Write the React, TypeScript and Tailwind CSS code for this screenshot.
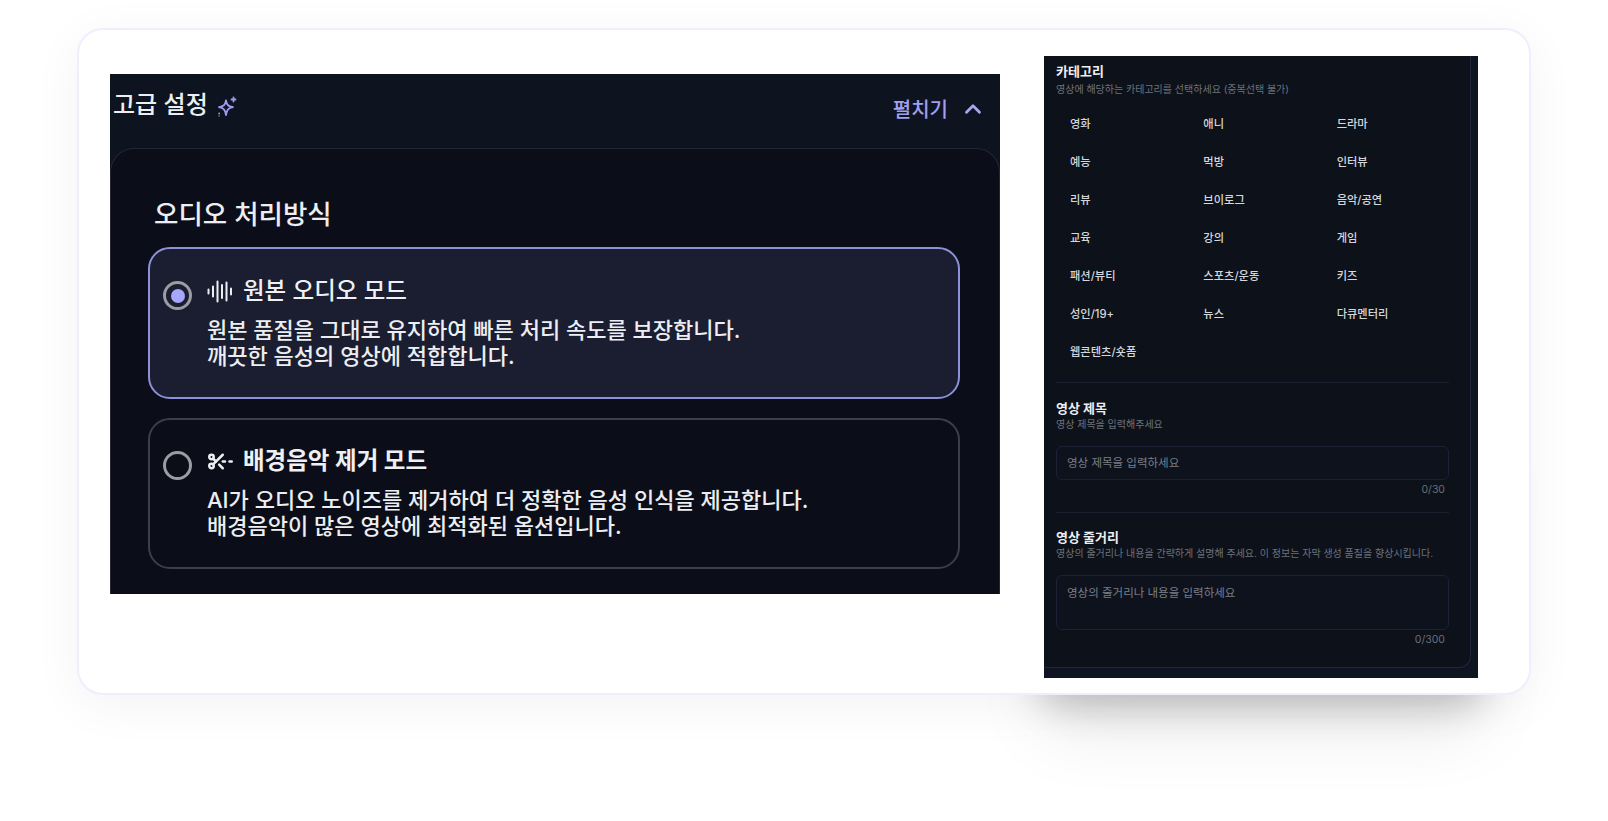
import { ChevronUp, ScissorsLineDashed } from "lucide-react";

const categories = [
  "영화", "애니", "드라마",
  "예능", "먹방", "인터뷰",
  "리뷰", "브이로그", "음악/공연",
  "교육", "강의", "게임",
  "패션/뷰티", "스포츠/운동", "키즈",
  "성인/19+", "뉴스", "다큐멘터리",
  "웹콘텐츠/숏폼",
];

function Sparkle() {
  return (
    <svg width="22" height="22" viewBox="0 0 22 22" fill="none" stroke="#9b9cf0" strokeWidth="1.8" strokeLinejoin="round" strokeLinecap="round">
      <path d="M10 4.5 C10.8 9 12.2 10.4 17 11.2 C12.2 12 10.8 13.6 10 19 C9.2 13.6 7.6 12 3 11.2 C7.6 10.4 9.2 9 10 4.5 Z" />
      <path d="M17.5 1.5v4M15.5 3.5h4" />
      <circle cx="3.2" cy="17.5" r="0.9" fill="#9b9cf0" stroke="none" />
      <circle cx="3" cy="20" r="0.7" fill="#9b9cf0" stroke="none" />
    </svg>
  );
}

function Wave() {
  return (
    <svg width="27" height="27" viewBox="0 0 27 27" fill="none" stroke="#eceef2" strokeWidth="2" strokeLinecap="round">
      <path d="M1.5 11.5v4M6 8.5v10M10.5 3.5v20M15 7v13M19.5 4.5v18M24 10.5v6" />
    </svg>
  );
}

function Option({ active, icon, title, lines, bold }: { active?: boolean; icon: React.ReactNode; title: string; lines: string[]; bold?: boolean }) {
  return (
    <div
      className={
        active
          ? "ml-[37px] w-[812px] h-[152px] rounded-[22px] border-2 border-[#8e90d8] bg-[#1a1e30] flex gap-[15px] pl-[13px] pt-[27px]"
          : "ml-[37px] w-[812px] h-[151px] rounded-[22px] border-2 border-[#3c3e4d] bg-[#0b0e18] flex gap-[15px] pl-[13px] pt-[26px]"
      }
    >
      <div className="mt-[5px] w-[29px] h-[29px] shrink-0 rounded-full border-[3px] border-[#9c9ca2] flex items-center justify-center">
        {active && <div className="w-[14px] h-[14px] rounded-full bg-[#a6a7fb]" />}
      </div>
      <div className="flex flex-col">
        <div className="flex items-center gap-[9px] h-[30px]">
          {icon}
          <span className={bold ? "text-[23.5px] font-bold leading-[30px] text-[#eef0f4]" : "text-[23.5px] font-medium leading-[30px] text-[#eef0f4]"}>{title}</span>
        </div>
        <div className="mt-[12px] text-[22px] font-medium leading-[25.6px] text-[#eceef2]">
          {lines.map((l) => (
            <div key={l}>{l}</div>
          ))}
        </div>
      </div>
    </div>
  );
}

export default function App() {
  return (
    <div className="relative w-[1608px] h-[821px] overflow-hidden bg-white font-['Inter','Noto_Sans_CJK_KR',sans-serif]">
      <div className="absolute left-[1044px] top-[400px] w-[434px] h-[278px] shadow-[0_26px_36px_rgba(0,0,0,0.2),0_50px_70px_rgba(0,0,0,0.09)]" />
      <div className="relative mt-[28px] ml-[77px] w-[1454px] h-[667px] rounded-[26px] border-2 border-[#f0eefe] bg-white shadow-[0_10px_50px_rgba(0,0,0,0.05)] flex items-start pl-[31px]">
        {/* left panel */}
        <div className="mt-[44px] w-[890px] h-[520px] shrink-0 overflow-hidden bg-[#0e1320] flex flex-col">
          <div className="h-[74px] shrink-0 flex justify-between pl-[3px] pr-[18px]">
            <div className="flex items-start gap-[8px] pt-[16px]">
              <span className="text-[24px] font-medium leading-[30px] text-[#eceef2]">고급 설정</span>
              <span className="mt-[6px]"><Sparkle /></span>
            </div>
            <div className="flex items-start gap-[12px] pt-[22px]">
              <span className="text-[20px] font-medium leading-[28px] text-[#9fa0ee]">펼치기</span>
              <ChevronUp size={26} strokeWidth={2.6} className="mt-[0px] -mr-[4px] text-[#a6a7ef]" />
            </div>
          </div>
          <div className="flex-1 rounded-t-[24px] border border-[#242636] border-b-0 bg-[#0b0e18]">
            <h2 className="pt-[49px] pl-[43px] text-[26.5px] font-medium leading-[32px] text-[#eceef2]">오디오 처리방식</h2>
            <div className="mt-[17px] flex flex-col gap-[19px]">
              <Option
                active
                icon={<Wave />}
                title="원본 오디오 모드"
                lines={["원본 품질을 그대로 유지하여 빠른 처리 속도를 보장합니다.", "깨끗한 음성의 영상에 적합합니다."]}
              />
              <Option
                bold
                icon={<ScissorsLineDashed size={27} strokeWidth={2.2} className="text-[#eceef2]" />}
                title="배경음악 제거 모드"
                lines={["AI가 오디오 노이즈를 제거하여 더 정확한 음성 인식을 제공합니다.", "배경음악이 많은 영상에 최적화된 옵션입니다."]}
              />
            </div>
          </div>
        </div>

        {/* right panel */}
        <div className="mt-[26px] ml-[44px] w-[434px] h-[622px] shrink-0 overflow-hidden bg-[#0f1422]">
          <div className="w-[427px] h-[612px] rounded-br-[12px] border-r border-b border-[#23263a] bg-[#0c111a] pl-[12px] pt-[6px] pr-[21px]">
            <h3 className="text-[13px] font-bold leading-[18px] text-[#eceef2]">카테고리</h3>
            <p className="mt-[2px] text-[10px] leading-[14px] text-[#6f727c]">영상에 해당하는 카테고리를 선택하세요 (중복선택 불가)</p>
            <div className="mt-[9px] grid grid-cols-3 w-[400px] auto-rows-[38px]">
              {categories.map((c) => (
                <div key={c} className="pl-[14px] flex items-center text-[11.25px] font-medium text-[#d5d7dd]">{c}</div>
              ))}
            </div>
            <div className="mt-[11px] h-px bg-[#1b1f2e]" />
            <h3 className="mt-[16px] text-[13px] font-bold leading-[18px] text-[#eceef2]">영상 제목</h3>
            <p className="text-[10px] leading-[14px] text-[#6f727c]">영상 제목을 입력해주세요</p>
            <input
              readOnly
              placeholder="영상 제목을 입력하세요"
              className="mt-[15px] block w-full h-[34px] rounded-[6px] border border-[#1c2235] bg-[#0d121c] px-[10px] text-[11.5px] outline-none placeholder:text-[#7b7f88]"
            />
            <div className="mt-[3px] pr-[4px] text-right text-[10.5px] leading-[14px] text-[#6b6e78]">0/30</div>
            <div className="mt-[15px] h-px bg-[#1b1f2e]" />
            <h3 className="mt-[15px] text-[13px] font-bold leading-[18px] text-[#eceef2]">영상 줄거리</h3>
            <p className="text-[10px] leading-[14px] text-[#6f727c]">영상의 줄거리나 내용을 간략하게 설명해 주세요. 이 정보는 자막 생성 품질을 향상시킵니다.</p>
            <textarea
              readOnly
              placeholder="영상의 줄거리나 내용을 입력하세요"
              className="mt-[15px] block w-full h-[55px] resize-none rounded-[6px] border border-[#1c2235] bg-[#0d121c] px-[10px] pt-[9px] text-[11.5px] leading-[16px] outline-none placeholder:text-[#7b7f88]"
            />
            <div className="mt-[3px] pr-[4px] text-right text-[10.5px] leading-[14px] text-[#6b6e78]">0/300</div>
          </div>
        </div>
      </div>
    </div>
  );
}
